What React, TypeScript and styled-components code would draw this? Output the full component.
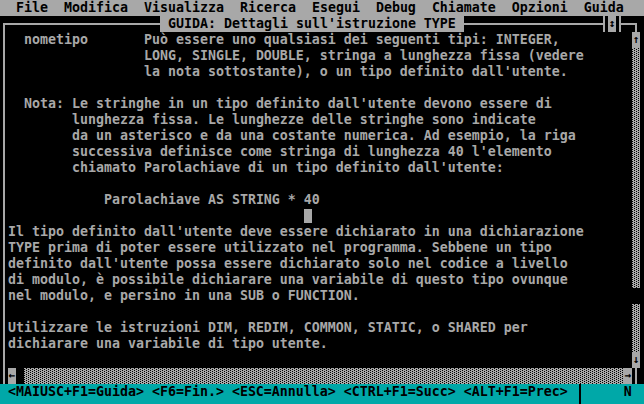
import { useId } from 'react';
import styled, { createGlobalStyle } from 'styled-components';

const GREY = '#a8a8a8';
const CYAN = '#00a8a8';

const GlobalStyle = createGlobalStyle`
  html, body {
    margin: 0;
    padding: 0;
    background: #000;
  }
`;

const Screen = styled.div`
  width: 644px;
  height: 404px;
  display: flex;
  flex-direction: column;
  background: #000;
  color: ${GREY};
  font-family: 'DejaVu Sans Mono', 'Liberation Mono', monospace;
  font-size: 13.29px;
  font-weight: bold;
  line-height: 16px;
  white-space: pre;
`;

const MenuBar = styled.nav`
  flex: none;
  height: 16px;
  display: flex;
  padding-left: 8px;
  background: ${GREY};
  color: #000;
`;

const MenuItem = styled.span`
  padding: 0 8px;
`;

const HelpWindow = styled.section`
  flex: none;
  width: 640px;
  height: 368px;
  display: flex;
  flex-direction: column;
`;

const TitleRow = styled.div`
  flex: none;
  display: flex;
  height: 16px;
`;

const Rule = styled.div<{ $cells?: number }>`
  flex: ${(p) => (p.$cells ? `0 0 ${p.$cells * 8}px` : '1 1 auto')};
  height: 2px;
  margin-top: 7px;
  background-color: ${GREY};
`;

const Corner = styled.div<{ $right?: boolean }>`
  flex: none;
  box-sizing: border-box;
  width: 5px;
  height: 9px;
  margin-top: 7px;
  ${(p) => (p.$right ? 'margin-right: 3px;' : 'margin-left: 3px;')}
  border-top: 2px solid ${GREY};
  ${(p) => (p.$right ? 'border-right' : 'border-left')}: 2px solid ${GREY};
`;

// ┤ and ├ around the maximize button
const Tee = styled.div<{ $right?: boolean }>`
  flex: none;
  display: flex;
  flex-direction: ${(p) => (p.$right ? 'row-reverse' : 'row')};
  width: 8px;
  height: 16px;

  &::before {
    content: '';
    width: 3px;
    height: 2px;
    margin-top: 7px;
    background: ${GREY};
  }
  &::after {
    content: '';
    width: 2px;
    height: 16px;
    background: ${GREY};
  }
`;

const Title = styled.h1`
  flex: none;
  margin: 0;
  padding: 0 8px;
  font: inherit;
  background: ${GREY};
  color: #000;
`;

const Arrow = styled.div`
  flex: none;
  width: 8px;
  height: 16px;
  display: flex;
  align-items: center;
  justify-content: center;
  background: ${GREY};
  color: #000;
  font-size: 11px;
`;

const Body = styled.div`
  flex: none;
  height: 336px;
  display: flex;
`;

const Edge = styled.div`
  flex: none;
  width: 2px;
  margin: 0 3px;
  background: ${GREY};
`;

const HelpText = styled.div`
  flex: none;
  width: 624px;
  display: flex;
  flex-direction: column;
`;

const Line = styled.div`
  height: 16px;
`;

const Cursor = styled.span`
  display: inline-block;
  width: 8px;
  height: 14px;
  margin-top: 1px;
  vertical-align: top;
  background: ${GREY};
`;

const VScroll = styled.div`
  flex: none;
  width: 8px;
  display: flex;
  flex-direction: column;
`;

const TrackBox = styled.div<{ $cells?: number; $vertical?: boolean }>`
  flex: ${(p) => (p.$cells ? `0 0 ${p.$cells * 16}px` : '1 1 auto')};
  ${(p) => (p.$vertical ? 'width: 8px;' : 'height: 16px;')}
  overflow: hidden;

  svg {
    display: block;
    width: 100%;
    height: 100%;
  }
`;

// the ░ shade of the scroll bars: black dots on grey
function Track({ cells, vertical }: { cells?: number; vertical?: boolean }) {
  const id = useId().replace(/:/g, '');
  return (
    <TrackBox $cells={cells} $vertical={vertical}>
      <svg>
        <defs>
          <pattern id={id} width="4" height="2" patternUnits="userSpaceOnUse">
            <rect width="4" height="2" fill={GREY} />
            <rect x="2" y="0" width="1" height="1" fill="#000" />
            <rect x="0" y="1" width="1" height="1" fill="#000" />
          </pattern>
        </defs>
        <rect width="100%" height="100%" fill={`url(#${id})`} />
      </svg>
    </TrackBox>
  );
}

const Thumb = styled.div`
  flex: none;
  width: 8px;
  height: 16px;
  background: #000;
`;

const HScroll = styled.div`
  flex: none;
  display: flex;
  height: 16px;
`;

const StatusBar = styled.footer`
  flex: none;
  height: 20px;
  display: flex;
  background: ${CYAN};
  color: #000;
`;

const Divider = styled.span`
  flex: none;
  width: 2px;
  margin: 0 3px;
  background: #000;
`;

const menu = ['File', 'Modifica', 'Visualizza', 'Ricerca', 'Esegui', 'Debug', 'Chiamate', 'Opzioni', 'Guida'];

const lines = [
  '  nometipo       Può essere uno qualsiasi dei seguenti tipi: INTEGER,',
  '                 LONG, SINGLE, DOUBLE, stringa a lunghezza fissa (vedere',
  "                 la nota sottostante), o un tipo definito dall'utente.",
  '',
  "  Nota: Le stringhe in un tipo definito dall'utente devono essere di",
  '        lunghezza fissa. Le lunghezze delle stringhe sono indicate',
  '        da un asterisco e da una costante numerica. Ad esempio, la riga',
  "        successiva definisce come stringa di lunghezza 40 l'elemento",
  "        chiamato Parolachiave di un tipo definito dall'utente:",
  '',
  '            Parolachiave AS STRING * 40',
  '',
  "Il tipo definito dall'utente deve essere dichiarato in una dichiarazione",
  'TYPE prima di poter essere utilizzato nel programma. Sebbene un tipo',
  "definito dall'utente possa essere dichiarato solo nel codice a livello",
  'di modulo, è possibile dichiarare una variabile di questo tipo ovunque',
  'nel modulo, e persino in una SUB o FUNCTION.',
  '',
  'Utilizzare le istruzioni DIM, REDIM, COMMON, STATIC, o SHARED per',
  'dichiarare una variabile di tipo utente.',
  '',
];

const cursor = { row: 11, col: 37 };

const keys = ['<MAIUSC+F1=Guida>', '<F6=Fin.>', '<ESC=Annulla>', '<CTRL+F1=Succ>', '<ALT+F1=Prec>'];

function App() {
  return (
    <>
      <GlobalStyle />
      <Screen>
        <MenuBar>
          {menu.map((m) => (
            <MenuItem key={m}>{m}</MenuItem>
          ))}
        </MenuBar>

        <HelpWindow>
          <TitleRow>
            <Corner />
            <Rule $cells={19} />
            <Title>GUIDA: Dettagli sull'istruzione TYPE</Title>
            <Rule />
            <Tee />
            <Arrow>↕</Arrow>
            <Tee $right />
            <Rule $cells={1} />
            <Corner $right />
          </TitleRow>

          <Body>
            <Edge />
            <HelpText>
              {lines.map((text, i) =>
                i === cursor.row ? (
                  <Line key={i}>
                    {text.padEnd(cursor.col, ' ')}
                    <Cursor />
                  </Line>
                ) : (
                  <Line key={i}>{text}</Line>
                )
              )}
            </HelpText>
            <VScroll>
              <Arrow>↑</Arrow>
              <Track vertical cells={15} />
              <Thumb />
              <Track vertical />
              <Arrow>↓</Arrow>
            </VScroll>
          </Body>

          <HScroll>
            <Edge />
            <Arrow>←</Arrow>
            <Thumb />
            <Track />
            <Arrow>→</Arrow>
            <Edge />
          </HScroll>
        </HelpWindow>

        <StatusBar>
          <span>{' ' + keys.join(' ') + ' '}</span>
          <Divider />
          <span>{'     N '}</span>
        </StatusBar>
      </Screen>
    </>
  );
}

export default App;
